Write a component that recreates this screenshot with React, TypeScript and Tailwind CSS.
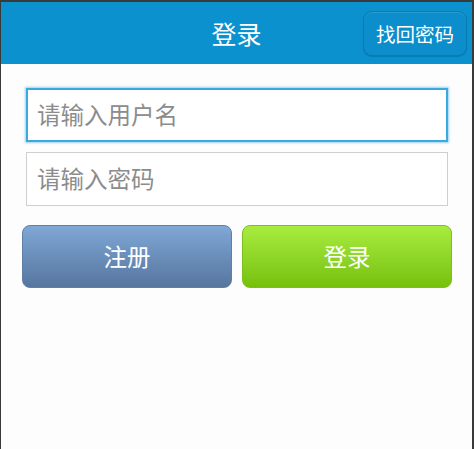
import React from "react";

const font = { fontFamily: '"Noto Sans CJK SC", "Noto Sans", sans-serif' };

export default function App() {
  return (
    <div
      className="h-[449px] w-[474px] border-t-2 border-l border-r-2 border-[#3a3a3a] bg-[#fdfdfd] overflow-hidden"
      style={font}
    >
      <div className="relative flex h-[62px] items-center justify-center bg-[#0b91ce]">
        <span className="text-[25px] leading-none text-white">登录</span>
        <button className="absolute right-[5px] top-[9px] flex h-[45px] w-[104px] items-center justify-center rounded-[9px] border border-[#0a7bb3] bg-[#0b8ecb] text-[19.5px] leading-none text-white shadow-[inset_0_1px_0_rgba(255,255,255,0.12),0_1px_1px_rgba(0,0,0,0.15)]">
          找回密码
        </button>
      </div>
      <div className="flex flex-col">
        <div className="ml-[25px] mt-[24px] flex h-[54px] w-[422px] items-center border-2 border-[#3aa9e0] bg-white pl-[9px] shadow-[0_0_2px_1px_rgba(90,180,230,0.6)]">
          <span className="text-[23.5px] leading-none text-[#8c8c8c]">请输入用户名</span>
        </div>
        <div className="ml-[25px] mt-[10px] flex h-[54px] w-[422px] items-center border border-[#cfcfcf] bg-white pl-[10px]">
          <span className="text-[23.5px] leading-none text-[#8c8c8c]">请输入密码</span>
        </div>
        <div className="ml-[21px] mt-[19px] flex w-[430px] gap-[10px]">
          <button className="flex h-[63px] w-[210px] items-center justify-center rounded-[8px] border border-[#5f7fa6] bg-gradient-to-b from-[#80a8d6] to-[#56769f] text-[23.5px] text-white">
            注册
          </button>
          <button className="flex h-[63px] w-[210px] items-center justify-center rounded-[8px] border border-[#7cc01c] bg-gradient-to-b from-[#a8ec3e] to-[#76c108] text-[23.5px] text-white">
            登录
          </button>
        </div>
      </div>
    </div>
  );
}
